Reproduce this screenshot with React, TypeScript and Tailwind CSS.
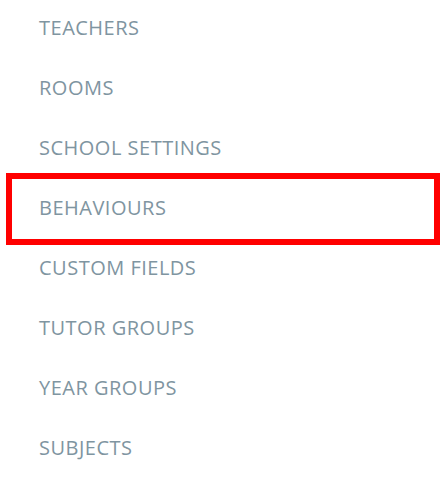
const items = [
  'TEACHERS',
  'ROOMS',
  'SCHOOL SETTINGS',
  'BEHAVIOURS',
  'CUSTOM FIELDS',
  'TUTOR GROUPS',
  'YEAR GROUPS',
  'SUBJECTS',
]

export default function App() {
  return (
    <nav
      className="h-[481px] w-[447px] overflow-hidden bg-white"
      style={{ fontFamily: '"Open Sans", "Liberation Sans", sans-serif' }}
    >
      <ul>
        {items.map((label) => (
          <li key={label} className="relative flex h-[60px] items-center pb-1 pl-[39px]">
            <a href="#" className="text-[20px] tracking-[0.5px] text-[#7f95a1]">
              {label}
            </a>
            {/* highlight box drawn over the selected row */}
            {label === 'BEHAVIOURS' && (
              <span className="pointer-events-none absolute -top-[7px] -bottom-[5px] left-[6px] right-[7px] border-[6px] border-[#ff0000]" />
            )}
          </li>
        ))}
      </ul>
    </nav>
  )
}
